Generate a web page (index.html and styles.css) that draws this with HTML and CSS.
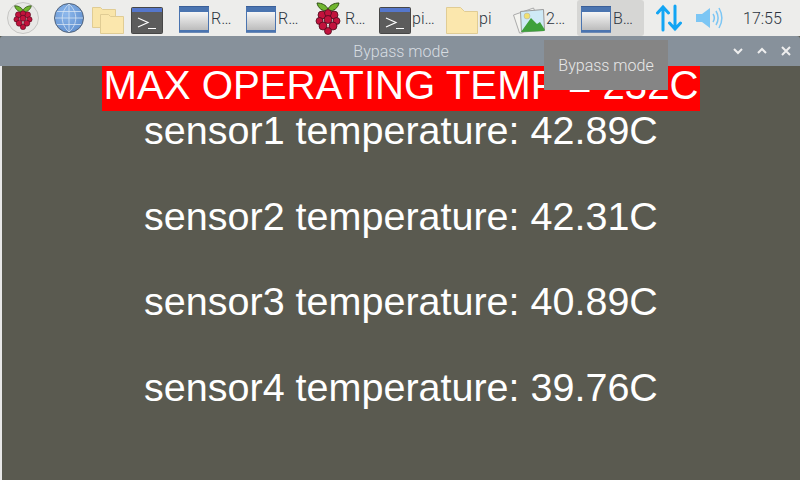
FILE: index.html
```html
<!DOCTYPE html>
<html>
<head lang="en">
    <meta charset="UTF-8">
    <title>Bypass mode</title>
    <link rel="stylesheet" href="styles.css">
</head>
<body>
<svg class="defs" width="0" height="0">
    <defs>
        <linearGradient id="winBody" x1="0" y1="0" x2="0" y2="1">
            <stop offset="0" stop-color="#f6f6f6"/>
            <stop offset="1" stop-color="#bcbcbc"/>
        </linearGradient>
        <radialGradient id="globeFill" cx="0.4" cy="0.35" r="0.8">
            <stop offset="0" stop-color="#8db8ec"/>
            <stop offset="1" stop-color="#5a8acb"/>
        </radialGradient>
    </defs>
    <symbol id="win" viewBox="0 0 32 32">
        <rect x="1" y="4" width="30" height="27" rx="1" fill="#4a74b0"/>
        <rect x="1" y="4" width="30" height="1" fill="#3a5f98"/>
        <rect x="2" y="10" width="28" height="18" fill="url(#winBody)"/>
        <rect x="1" y="30" width="30" height="1" fill="#6a88b4"/>
    </symbol>
    <symbol id="term" viewBox="0 0 32 32">
        <rect x="0.500" y="5.500" width="31" height="26" rx="1" fill="#5c5c5c" stroke="#474747"/>
        <rect x="1" y="6" width="30" height="4" fill="#5577cc"/>
        <path d="M7 16l10 4.500-10 4.500M17 26.500h8" fill="none" stroke="#fff" stroke-width="1.200"/>
    </symbol>
    <symbol id="berry" viewBox="0 0 26 33">
        <path d="M12 9C7 9 3 6 2 1c5 0 9 2 11 6 2-4 6-6 11-6-1 5-5 8-10 8z" fill="#70b62e" stroke="#2f4f14" stroke-width="1"/>
        <g fill="#c2123c" stroke="#4c0c1e" stroke-width="0.800">
            <circle cx="7" cy="13" r="4"/>
            <circle cx="19" cy="13" r="4"/>
            <circle cx="13" cy="11" r="3.500"/>
            <circle cx="4.500" cy="19" r="3.500"/>
            <circle cx="21.500" cy="19" r="3.500"/>
            <circle cx="13" cy="17.500" r="4"/>
            <circle cx="8" cy="24" r="4"/>
            <circle cx="18" cy="24" r="4"/>
            <circle cx="13" cy="29" r="3.500"/>
        </g>
    </symbol>
</svg>
<div class="panel">
    <div class="launch">
        <svg class="menu-icon" width="32" height="32" viewBox="0 0 32 32">
            <circle cx="16" cy="16" r="15.500" fill="#e8e8e6" stroke="#c6c6c4"/>
            <use href="#berry" x="6" y="3" width="20" height="25"/>
        </svg>
        <svg class="globe" width="32" height="32" viewBox="0 0 32 32">
            <circle cx="16" cy="16" r="14.500" fill="url(#globeFill)" stroke="#56657a"/>
            <path d="M2 16h28M4 9.500h24M4 22.500h24M16 2v28M16 2c-9 8-9 20 0 28M16 2c9 8 9 20 0 28" fill="none" stroke="#d5e3f3" stroke-width="0.800"/>
        </svg>
        <svg class="folders" width="33" height="32" viewBox="0 0 33 32">
            <path d="M0.500 5.500h8l2 2h13v18h-23z" fill="#f9e5a9" stroke="#e0cc94"/>
            <path d="M8.500 12.500h8l2 2h13v17h-23z" fill="#fbe7ad" stroke="#e0cc94"/>
        </svg>
        <svg class="terminal" width="32" height="32" viewBox="0 0 32 32"><use href="#term"/></svg>
    </div>
    <div class="tasks">
        <div class="task">
            <svg width="32" height="32" viewBox="0 0 32 32"><use href="#win"/></svg><span>R…</span>
        </div>
        <div class="task">
            <svg width="32" height="32" viewBox="0 0 32 32"><use href="#win"/></svg><span>R…</span>
        </div>
        <div class="task">
            <svg width="32" height="34" viewBox="0 0 32 34"><use href="#berry" x="3" y="1" width="26" height="33"/></svg><span>R…</span>
        </div>
        <div class="task">
            <svg width="32" height="32" viewBox="0 0 32 32"><use href="#term"/></svg><span>pi…</span>
        </div>
        <div class="task">
            <svg width="32" height="32" viewBox="0 0 32 32">
                <path d="M0.500 5.500h14l4 4h13v22h-31z" fill="#fbe7ad" stroke="#e0cc94"/>
            </svg><span>pi</span>
        </div>
        <div class="task">
            <svg width="32" height="32" viewBox="0 0 32 32">
                <path d="M0.500 13l20-7 3 7 -14 18h-3z" fill="#f4f4f0" stroke="#aaa"/>
                <path d="M7.500 9.500l23-2 1 21-23 1.500z" fill="#cfeaf6" stroke="#999"/>
                <path d="M8 30l10-14 6 6 3-2 5 8-1 1z" fill="#3ea03a"/>
                <circle cx="14" cy="14" r="3" fill="#f0e070" stroke="#aaa" stroke-width="0.500"/>
            </svg><span>2…</span>
        </div>
        <div class="task active">
            <svg width="32" height="32" viewBox="0 0 32 32"><use href="#win"/></svg><span>B…</span>
        </div>
    </div>
    <div class="tray">
        <svg width="26" height="28" viewBox="0 0 26 28">
            <path d="M7 26V3M1.500 9L7 3l5.500 6M19 2v23M13.500 19l5.500 6 5.500-6" fill="none" stroke="#12a5f4" stroke-width="3" stroke-linecap="round"/>
        </svg>
        <svg width="28" height="26" viewBox="0 0 28 26">
            <path d="M1 9h6l8-6v20l-8-6H1z" fill="#7cc6f4"/>
            <path d="M18 9c2 3 2 5 0 8M21 6c3 5 3 9 0 14M24 3c4 7 4 13 0 20" fill="none" stroke="#7cc6f4" stroke-width="1.500"/>
        </svg>
        <span class="clock">17:55</span>
    </div>
</div>
<div class="titlebar">
    <span class="title">Bypass mode</span>
    <div class="controls">
        <svg width="10" height="8" viewBox="0 0 10 8"><path d="M1 2l4 4 4-4" fill="none" stroke="#eee" stroke-width="2"/></svg>
        <svg width="10" height="8" viewBox="0 0 10 8"><path d="M1 6l4-4 4 4" fill="none" stroke="#eee" stroke-width="2"/></svg>
        <svg width="10" height="10" viewBox="0 0 10 10"><path d="M1 1l8 8M9 1l-8 8" stroke="#eee" stroke-width="2"/></svg>
    </div>
</div>
<div class="window">
    <div class="warning">MAX OPERATING TEMP = 232C</div>
    <div class="sensor">sensor1 temperature: 42.89C</div>
    <div class="sensor">sensor2 temperature: 42.31C</div>
    <div class="sensor">sensor3 temperature: 40.89C</div>
    <div class="sensor">sensor4 temperature: 39.76C</div>
</div>
<div class="tooltip">Bypass mode</div>
</body>
</html>
```
FILE: styles.css
```css
*{
    margin: 0;
    padding: 0;
    box-sizing: border-box;
}
body{
    width: 800px;
    height: 480px;
    overflow: hidden;
    position: relative;
    background: #5a5a50;
    font-family: "Roboto", sans-serif;
}
.defs{
    position: absolute;
}
.panel{
    height: 36px;
    background: #ededeb;
    display: flex;
    align-items: center;
    padding-left: 7px;
    color: #2c3440;
    font-size: 16px;
    font-weight: 300;
}
.launch{
    display: flex;
}
.globe{
    margin-left: 14px;
}
.folders{
    margin-left: 7px;
}
.terminal{
    margin-left: 6px;
}
.tasks{
    display: flex;
    margin-left: 12px;
}
.task{
    width: 67px;
    height: 36px;
    display: flex;
    align-items: center;
    gap: 1px;
    padding-left: 3px;
}
.task.active{
    background: #d6d6d4;
    border-radius: 3px;
}
.tray{
    display: flex;
    align-items: center;
    margin-left: 12px;
}
.tray svg + svg{
    margin-left: 13px;
}
.clock{
    margin-left: 20px;
}
.titlebar{
    height: 30px;
    background: #87919b;
    border-radius: 3px 3px 0 0;
    position: relative;
    display: flex;
    justify-content: center;
    align-items: center;
    padding-left: 2px;
    color: #d8dde2;
    font-size: 16px;
    font-weight: 300;
}
.controls{
    position: absolute;
    right: 9px;
    top: 0;
    height: 30px;
    display: flex;
    align-items: center;
    gap: 14px;
}
.window{
    height: 414px;
    border-left: 2px solid #e8e8e8;
    display: flex;
    flex-direction: column;
    align-items: center;
    font-family: "Liberation Sans", sans-serif;
    color: #fff;
}
.warning{
    background: #f00;
    padding: 0 1.500px 5px;
    margin-bottom: -1px;
    font-size: 40.200px;
    line-height: 40px;
}
.sensor{
    font-size: 39.500px;
    line-height: 40px;
    margin-bottom: 45.600px;
}
.tooltip{
    position: absolute;
    left: 544px;
    top: 40px;
    width: 124px;
    height: 50px;
    background: #858585;
    color: #e8e8e8;
    font-size: 16px;
    font-weight: 300;
    display: flex;
    align-items: center;
    justify-content: center;
}
```
